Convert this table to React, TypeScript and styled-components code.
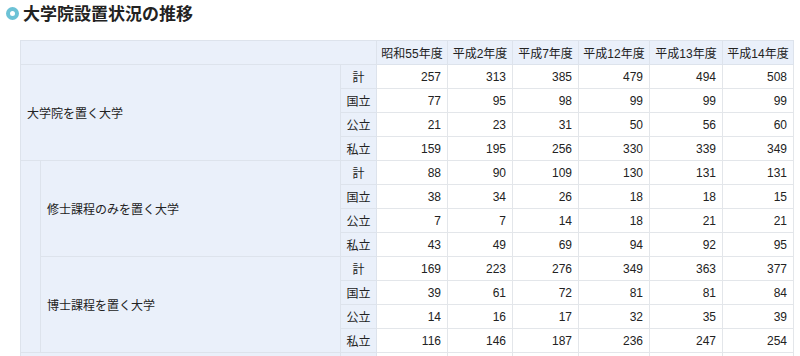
import styled, { createGlobalStyle } from "styled-components";

const GlobalStyle = createGlobalStyle`
  html, body {
    margin: 0;
    padding: 0;
    background: #ffffff;
  }
  body {
    font-family: "Liberation Sans", "Noto Sans CJK JP", sans-serif;
    color: #222;
  }
`;

const Page = styled.div`
  width: 800px;
  height: 356px;
  overflow: hidden;
`;

const Heading = styled.h2`
  display: flex;
  align-items: flex-start;
  gap: 4px;
  margin: 0;
  padding: 3px 0 0 6px;
  height: 37px;
  box-sizing: border-box;
  font-size: 17px;
  font-weight: bold;
  line-height: 20px;
  color: #222;
  font-family: "Noto Sans CJK JP", sans-serif;
`;

const Bullet = styled.span`
  flex: none;
  width: 13px;
  height: 13px;
  margin-top: 4px;
  border-radius: 50%;
  box-sizing: border-box;
  border: 4px solid #6cc2d6;
  background: #ffffff;
`;

const TableWrap = styled.div`
  padding: 3px 0 0 20px;
`;

const Table = styled.table`
  width: 773px;
  table-layout: fixed;
  border-collapse: collapse;
  font-size: 12px;
  font-family: "Liberation Sans", "Noto Sans CJK JP", sans-serif;
`;

const HeadCell = styled.th`
  background: #eaf0fa;
  border: 1px solid #dde3ec;
  height: 23px;
  padding: 0 4px;
  font-weight: normal;
  color: #222;
  text-align: center;
  white-space: nowrap;
`;

const GroupCell = styled.th<{ $indent?: boolean }>`
  background: #eaf0fa;
  border: 1px solid #dde3ec;
  ${(p) => (p.$indent ? "border-right: 1px dotted #d8dee8;" : "")}
  padding: 0 6px;
  text-align: left;
  font-weight: normal;
  color: #222;
`;

const KindCell = styled.th`
  background: #eaf0fa;
  border: 1px solid #dde3ec;
  height: 23px;
  padding: 0;
  text-align: center;
  font-weight: normal;
  color: #222;
`;

const NumCell = styled.td`
  border: 1px solid #e3e6ea;
  height: 23px;
  padding: 0 6px;
  text-align: right;
  color: #222;
  background: #fff;
`;

const widths = [20, 300, 36, 71, 65, 66, 71, 73, 71];
const years = ["昭和55年度", "平成2年度", "平成7年度", "平成12年度", "平成13年度", "平成14年度"];
const kinds = ["計", "国立", "公立", "私立"];

type Group = { label: string; rows: number[][] };

const total: Group = {
  label: "大学院を置く大学",
  rows: [
    [257, 313, 385, 479, 494, 508],
    [77, 95, 98, 99, 99, 99],
    [21, 23, 31, 50, 56, 60],
    [159, 195, 256, 330, 339, 349],
  ],
};

const subs: Group[] = [
  {
    label: "修士課程のみを置く大学",
    rows: [
      [88, 90, 109, 130, 131, 131],
      [38, 34, 26, 18, 18, 15],
      [7, 7, 14, 18, 21, 21],
      [43, 49, 69, 94, 92, 95],
    ],
  },
  {
    label: "博士課程を置く大学",
    rows: [
      [169, 223, 276, 349, 363, 377],
      [39, 61, 72, 81, 81, 84],
      [14, 16, 17, 32, 35, 39],
      [116, 146, 187, 236, 247, 254],
    ],
  },
];

export default function App() {
  return (
    <Page>
      <GlobalStyle />
      <Heading>
        <Bullet />
        大学院設置状況の推移
      </Heading>
      <TableWrap>
        <Table>
          <colgroup>
            {widths.map((w, i) => (
              <col key={i} style={{ width: w }} />
            ))}
          </colgroup>
          <thead>
            <tr>
              <HeadCell colSpan={3} />
              {years.map((y) => (
                <HeadCell key={y}>{y}</HeadCell>
              ))}
            </tr>
          </thead>
          <tbody>
            {total.rows.map((row, i) => (
              <tr key={"t" + i}>
                {i === 0 && (
                  <GroupCell colSpan={2} rowSpan={4}>
                    {total.label}
                  </GroupCell>
                )}
                <KindCell>{kinds[i]}</KindCell>
                {row.map((v, j) => (
                  <NumCell key={j}>{v}</NumCell>
                ))}
              </tr>
            ))}
            {subs.map((g, gi) =>
              g.rows.map((row, i) => (
                <tr key={gi + "-" + i}>
                  {gi === 0 && i === 0 && <GroupCell rowSpan={8} $indent />}
                  {i === 0 && <GroupCell rowSpan={4}>{g.label}</GroupCell>}
                  <KindCell>{kinds[i]}</KindCell>
                  {row.map((v, j) => (
                    <NumCell key={j}>{v}</NumCell>
                  ))}
                </tr>
              ))
            )}
            <tr>
              <GroupCell colSpan={2} />
              <KindCell />
              {years.map((y) => (
                <NumCell key={y} />
              ))}
            </tr>
          </tbody>
        </Table>
      </TableWrap>
    </Page>
  );
}
